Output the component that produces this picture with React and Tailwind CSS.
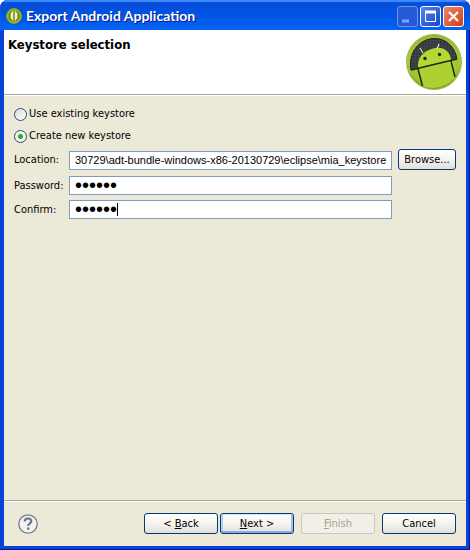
import React, { useState } from "react";

const fieldClass =
  "h-[19px] w-full min-w-0 border border-[#7f9db9] bg-white pl-[5px] font-[Liberation_Sans,sans-serif] text-black outline-none";

const AndroidLogo = () => (
  <svg viewBox="0 0 56 56" className="h-14 w-14 shrink-0" aria-hidden="true">
    <defs>
      <linearGradient id="rim" x1="0" y1="0" x2="0" y2="1">
        <stop offset="0" stopColor="#8fb52c" />
        <stop offset="0.5" stopColor="#a9cc45" />
        <stop offset="1" stopColor="#7da01f" />
      </linearGradient>
      <radialGradient id="body" cx="0.5" cy="0.4" r="0.6">
        <stop offset="0" stopColor="#b5d834" />
        <stop offset="1" stopColor="#9dc32b" />
      </radialGradient>
      <pattern id="mesh" width="3" height="3" patternUnits="userSpaceOnUse">
        <rect width="3" height="3" fill="#36383d" />
        <path d="M0 0H3M0 0V3" stroke="#4b4e54" strokeWidth="0.8" />
      </pattern>
    </defs>
    <circle cx="28" cy="28" r="27.5" fill="url(#rim)" stroke="#9aba4c" />
    <circle cx="28" cy="28" r="25" fill="url(#body)" />
    <path d="M5 36C2 20 12 5 28 4.500C40 4 49 13 51 25L45 26L12 34Z" fill="url(#mesh)" />
    <path d="M5 36C2 20 12 5 28 4.500C40 4 49 13 51 25" fill="none" stroke="#222" strokeWidth="1" />
    <path d="M12 34C11 24 17 17 27 14.500C37 12 44 17 45 26Z" fill="#b4d834" />
    <path d="M17 19L14 14M31 15L33 10" stroke="#d3dfa4" strokeWidth="1.300" />
    <path d="M12 35L45 26L50 43C37 56 25 55 16 52Z" fill="#add132" />
    <path d="M5 36L51 25M12 35L16.500 52M45 27L49 43" stroke="#1c2c12" strokeWidth="1.500" fill="none" />
    <circle cx="19" cy="24.500" r="1.700" fill="#1c2c12" />
    <circle cx="33.500" cy="20.500" r="1.700" fill="#1c2c12" />
  </svg>
);

const TitleIcon = () => (
  <svg viewBox="0 0 16 16" className="h-4 w-4 shrink-0" aria-hidden="true">
    <circle cx="8" cy="8" r="7.500" fill="#94b82a" stroke="#82a31f" />
    <circle cx="8" cy="8" r="5.500" fill="#64801a" />
    <path d="M7.300 2.500V13.500L4.500 10V5.500ZM8.700 2.500V13.500L11.500 10V5.500Z" fill="#edf2bd" />
  </svg>
);

const CaptionButton = ({ label, className, children }) => (
  <button
    type="button"
    aria-label={label}
    className={`flex h-[21px] w-[21px] items-center justify-center rounded-[3px] border ${className}`}
  >
    <svg viewBox="0 0 19 19" className="h-[19px] w-[19px]" fill="none" aria-hidden="true">
      {children}
    </svg>
  </button>
);

const DialogButton = ({ className = "w-[74px]", highlighted, disabled, children }) => {
  let look =
    "border-[#003c74] bg-linear-to-b from-white via-[#f5f4ef] to-[#e3dfd6] text-black";
  if (highlighted) {
    look += " shadow-[inset_0_1px_0_#cee7ff,inset_0_-2px_0_#8fa5ee,inset_2px_0_0_#b5cdf6,inset_-2px_0_0_#a5bcf3]";
  }
  if (disabled) {
    look = "border-[#c9c7ba] bg-[#f2f0e6] text-[#a1a192]";
  }
  return (
    <button
      type="button"
      disabled={disabled}
      className={`flex h-[21px] shrink-0 items-center justify-center rounded-[3px] border ${look} ${className}`}
    >
      <span>{children}</span>
    </button>
  );
};

const RadioOption = ({ label, value, selected, onSelect }) => {
  const fill =
    selected === value
      ? "bg-[radial-gradient(circle,#2cac2c_2px,#f4f4f1_3px)]"
      : "bg-linear-to-br from-[#dcdcd7] to-white";
  return (
    <label className="flex h-[22px] items-center gap-0.5">
      <input
        type="radio"
        name="keystore"
        value={value}
        checked={selected === value}
        onChange={() => onSelect(value)}
        className={`h-[13px] w-[13px] appearance-none rounded-full border border-[#1d5281] ${fill}`}
      />
      {label}
    </label>
  );
};

const App = () => {
  const [mode, setMode] = useState("new");
  const [location, setLocation] = useState(
    "30729\\adt-bundle-windows-x86-20130729\\eclipse\\mia_keystore"
  );
  const [password, setPassword] = useState("mia123");
  const [confirm, setConfirm] = useState("mia123");

  return (
    <div className="flex min-h-screen flex-col overflow-hidden rounded-t-lg bg-[#0843d8] font-[DejaVu_Sans_Condensed,DejaVu_Sans,sans-serif] text-[11px] leading-[14px] text-black shadow-[inset_-1px_-1px_0_#001a9c]">
      {/* Title bar */}
      <header className="flex h-[30px] items-center gap-1 bg-linear-to-b from-[#0a4ad6] via-[#0054e3] to-[#0463f6] px-1.5 pt-0.5 shadow-[inset_0_2px_1px_#3b8cff]">
        <TitleIcon />
        <h1 className="flex-1 font-[Lato,sans-serif] text-[14px] leading-[20px] font-bold whitespace-nowrap text-white [text-shadow:1px_1px_0_#0a1883]">
          Export Android Application
        </h1>
        <div className="flex gap-0.5">
          <CaptionButton label="Minimize" className="border-[#7293e8] bg-[#2559d7]">
            <path d="M4 14H11" stroke="#86a5ee" strokeWidth="3" />
          </CaptionButton>
          <CaptionButton label="Maximize" className="border-white bg-linear-to-br from-[#5585ee] to-[#1745c9]">
            <path d="M4.500 5V14.500H14.500V5" stroke="white" />
            <path d="M4 5H15" stroke="white" strokeWidth="3" />
          </CaptionButton>
          <CaptionButton label="Close" className="border-white bg-linear-to-br from-[#ed8567] to-[#cf3b13]">
            <path d="M5 5L14 14M14 5L5 14" stroke="white" strokeWidth="2.200" />
          </CaptionButton>
        </div>
      </header>

      <div className="mx-1 mb-1 flex flex-1 flex-col bg-[#ece9d8]">
        {/* Page heading */}
        <section className="flex items-start justify-between border-b border-[#aca899] bg-white p-1">
          <h2 className="pt-1 text-[13px] font-bold">Keystore selection</h2>
          <AndroidLogo />
        </section>

        <main className="flex-1 border-t border-white px-2.5 pt-[7px]">
          <RadioOption label="Use existing keystore" value="existing" selected={mode} onSelect={setMode} />
          <RadioOption label="Create new keystore" value="new" selected={mode} onSelect={setMode} />

          <div className="mt-0.5 grid grid-cols-[55px_1fr_64px] items-center gap-y-[5px]">
            <label htmlFor="location">Location:</label>
            <input
              id="location"
              type="text"
              value={location}
              onChange={(e) => setLocation(e.target.value)}
              className={`${fieldClass} text-[11px]`}
            />
            <DialogButton className="mb-px ml-1.5 w-[58px]">Browse...</DialogButton>

            <label htmlFor="password">Password:</label>
            <input
              id="password"
              type="password"
              value={password}
              onChange={(e) => setPassword(e.target.value)}
              className={`${fieldClass} text-[20px]`}
            />
            <span />

            <label htmlFor="confirm">Confirm:</label>
            <div className="relative flex">
              <input
                id="confirm"
                type="password"
                value={confirm}
                onChange={(e) => setConfirm(e.target.value)}
                className={`${fieldClass} text-[20px]`}
              />
              {/* Text caret */}
              <span className="absolute top-[3px] left-12 h-[13px] w-px bg-black" />
            </div>
          </div>
        </main>

        {/* Button bar */}
        <footer className="flex items-center border-t border-[#aca899] px-2.5 pt-3 pb-3 shadow-[inset_0_1px_0_white]">
          <button type="button" aria-label="Help" className="ml-1">
            <svg viewBox="0 0 20 20" className="h-5 w-5" fill="none" aria-hidden="true">
              <circle cx="10" cy="10" r="9.200" fill="#f3f2ee" stroke="#737d94" strokeWidth="1.300" />
              <path
                d="M6.700 7.500C6.700 3.500 13.300 3.500 13.300 7.300C13.300 9.500 10.200 9.500 10.200 12"
                stroke="#69748f"
                strokeWidth="2.200"
              />
              <path d="M9 13.500H11.400V15.700H9Z" fill="#69748f" />
            </svg>
          </button>
          <div className="ml-auto flex gap-[7px]">
            <div className="flex gap-0.5">
              <DialogButton>
                &lt; <u>B</u>ack
              </DialogButton>
              <DialogButton highlighted>
                <u>N</u>ext &gt;
              </DialogButton>
            </div>
            <DialogButton disabled>
              <u>F</u>inish
            </DialogButton>
            <DialogButton>Cancel</DialogButton>
          </div>
        </footer>
      </div>
    </div>
  );
};

export default App;
